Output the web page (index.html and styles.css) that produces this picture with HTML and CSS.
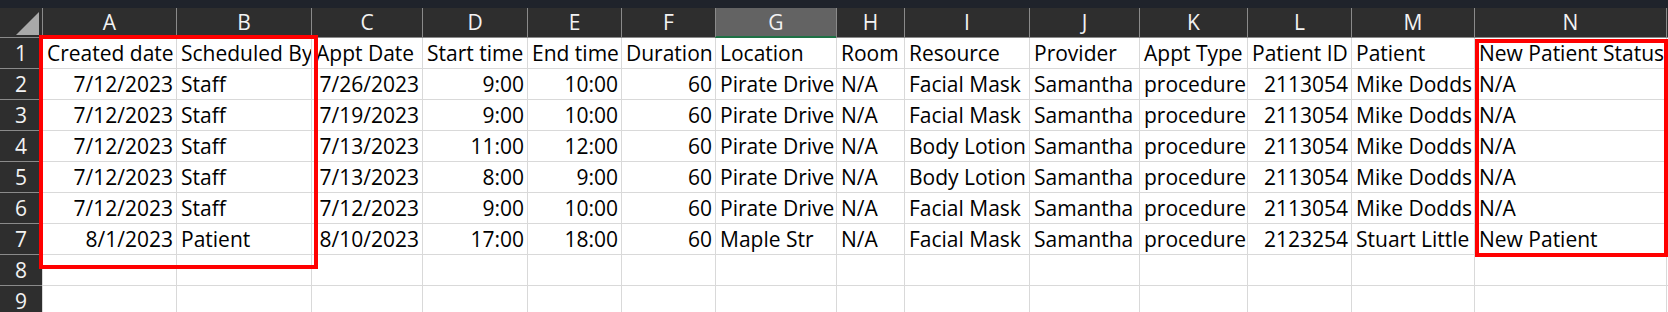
FILE: index.html
```html
<!DOCTYPE html>
<html>
<head>
<meta charset="utf-8">
<link rel="stylesheet" href="styles.css">
</head>
<body>
<div class="topbar"></div>
<div class="wrap">
  <div class="sheet">
    <div class="corner"><svg width="42" height="30" viewBox="0 0 42 30"><polygon points="16,27 39,27 39,4" fill="#a9a9a9"/></svg></div>
    <div class="ch">A</div><div class="ch">B</div><div class="ch">C</div><div class="ch">D</div><div class="ch">E</div><div class="ch">F</div><div class="ch sel">G</div><div class="ch">H</div><div class="ch">I</div><div class="ch">J</div><div class="ch">K</div><div class="ch">L</div><div class="ch">M</div><div class="ch">N</div><div class="ch"></div>

    <div class="rh">1</div>
    <div class="c">Created date</div><div class="c">Scheduled By</div><div class="c">Appt Date</div><div class="c">Start time</div><div class="c">End time</div><div class="c">Duration</div><div class="c">Location</div><div class="c">Room</div><div class="c">Resource</div><div class="c">Provider</div><div class="c">Appt Type</div><div class="c">Patient ID</div><div class="c">Patient</div><div class="c">New Patient Status</div><div class="c"></div>

    <div class="rh">2</div>
    <div class="c r">7/12/2023</div><div class="c">Staff</div><div class="c r">7/26/2023</div><div class="c r">9:00</div><div class="c r">10:00</div><div class="c r">60</div><div class="c">Pirate Drive</div><div class="c">N/A</div><div class="c">Facial Mask</div><div class="c">Samantha</div><div class="c">procedure</div><div class="c r">2113054</div><div class="c">Mike Dodds</div><div class="c">N/A</div><div class="c"></div>

    <div class="rh">3</div>
    <div class="c r">7/12/2023</div><div class="c">Staff</div><div class="c r">7/19/2023</div><div class="c r">9:00</div><div class="c r">10:00</div><div class="c r">60</div><div class="c">Pirate Drive</div><div class="c">N/A</div><div class="c">Facial Mask</div><div class="c">Samantha</div><div class="c">procedure</div><div class="c r">2113054</div><div class="c">Mike Dodds</div><div class="c">N/A</div><div class="c"></div>

    <div class="rh">4</div>
    <div class="c r">7/12/2023</div><div class="c">Staff</div><div class="c r">7/13/2023</div><div class="c r">11:00</div><div class="c r">12:00</div><div class="c r">60</div><div class="c">Pirate Drive</div><div class="c">N/A</div><div class="c">Body Lotion</div><div class="c">Samantha</div><div class="c">procedure</div><div class="c r">2113054</div><div class="c">Mike Dodds</div><div class="c">N/A</div><div class="c"></div>

    <div class="rh">5</div>
    <div class="c r">7/12/2023</div><div class="c">Staff</div><div class="c r">7/13/2023</div><div class="c r">8:00</div><div class="c r">9:00</div><div class="c r">60</div><div class="c">Pirate Drive</div><div class="c">N/A</div><div class="c">Body Lotion</div><div class="c">Samantha</div><div class="c">procedure</div><div class="c r">2113054</div><div class="c">Mike Dodds</div><div class="c">N/A</div><div class="c"></div>

    <div class="rh">6</div>
    <div class="c r">7/12/2023</div><div class="c">Staff</div><div class="c r">7/12/2023</div><div class="c r">9:00</div><div class="c r">10:00</div><div class="c r">60</div><div class="c">Pirate Drive</div><div class="c">N/A</div><div class="c">Facial Mask</div><div class="c">Samantha</div><div class="c">procedure</div><div class="c r">2113054</div><div class="c">Mike Dodds</div><div class="c">N/A</div><div class="c"></div>

    <div class="rh">7</div>
    <div class="c r">8/1/2023</div><div class="c">Patient</div><div class="c r">8/10/2023</div><div class="c r">17:00</div><div class="c r">18:00</div><div class="c r">60</div><div class="c">Maple Str</div><div class="c">N/A</div><div class="c">Facial Mask</div><div class="c">Samantha</div><div class="c">procedure</div><div class="c r">2123254</div><div class="c">Stuart Little</div><div class="c">New Patient</div><div class="c"></div>

    <div class="rh">8</div>
    <div class="c"></div><div class="c"></div><div class="c"></div><div class="c"></div><div class="c"></div><div class="c"></div><div class="c"></div><div class="c"></div><div class="c"></div><div class="c"></div><div class="c"></div><div class="c"></div><div class="c"></div><div class="c"></div><div class="c"></div>

    <div class="rh">9</div>
    <div class="c"></div><div class="c"></div><div class="c"></div><div class="c"></div><div class="c"></div><div class="c"></div><div class="c"></div><div class="c"></div><div class="c"></div><div class="c"></div><div class="c"></div><div class="c"></div><div class="c"></div><div class="c"></div><div class="c"></div>
  </div>
  <div class="mark mark-left"></div>
  <div class="mark mark-right"></div>
</div>
</body>
</html>
```

FILE: styles.css
```css
html, body {
  margin: 0;
  padding: 0;
  background: #ffffff;
  overflow: hidden;
}
body {
  width: 1668px;
  height: 312px;
  font-family: "Open Sans", Lato, sans-serif;
  font-size: 21px;
}
.topbar {
  height: 8px;
  background: #1f232b;
}
.wrap {
  position: relative;
}
.sheet {
  display: grid;
  grid-template-columns: 42px 134px 135px 111px 105px 94px 94px 121px 68px 125px 110px 108px 104px 123px 192px 2px;
  grid-template-rows: 30px repeat(9, 31px);
}
.corner {
  background: #2e2e2e;
  border-bottom: 1px solid #8a8a8a;
  box-sizing: border-box;
  height: 30px;
}
.corner svg {
  display: block;
}
.ch {
  background: #2e2e2e;
  color: #f2f2f2;
  text-align: center;
  line-height: 29px;
  border-left: 1px solid #8a8a8a;
  border-bottom: 1px solid #8a8a8a;
  box-sizing: border-box;
}
.ch.sel {
  background: #636363;
  border-bottom: 2px solid #1e7145;
  line-height: 28px;
}
.rh {
  background: #2e2e2e;
  color: #f2f2f2;
  text-align: center;
  line-height: 31px;
  border-bottom: 1px solid #8a8a8a;
  box-sizing: border-box;
}
.c {
  color: #000000;
  line-height: 31px;
  padding: 0 3px 0 4px;
  border-left: 1px solid #d9d9d9;
  border-bottom: 1px solid #d9d9d9;
  box-sizing: border-box;
  white-space: nowrap;
  overflow: hidden;
}
.c.r {
  text-align: right;
}
.mark {
  position: absolute;
  border: 4px solid #ff0000;
  box-sizing: border-box;
}
.mark-left {
  left: 39px;
  top: 27px;
  width: 279px;
  height: 234px;
}
.mark-right {
  left: 1475px;
  top: 31px;
  width: 193px;
  height: 218px;
}
```
